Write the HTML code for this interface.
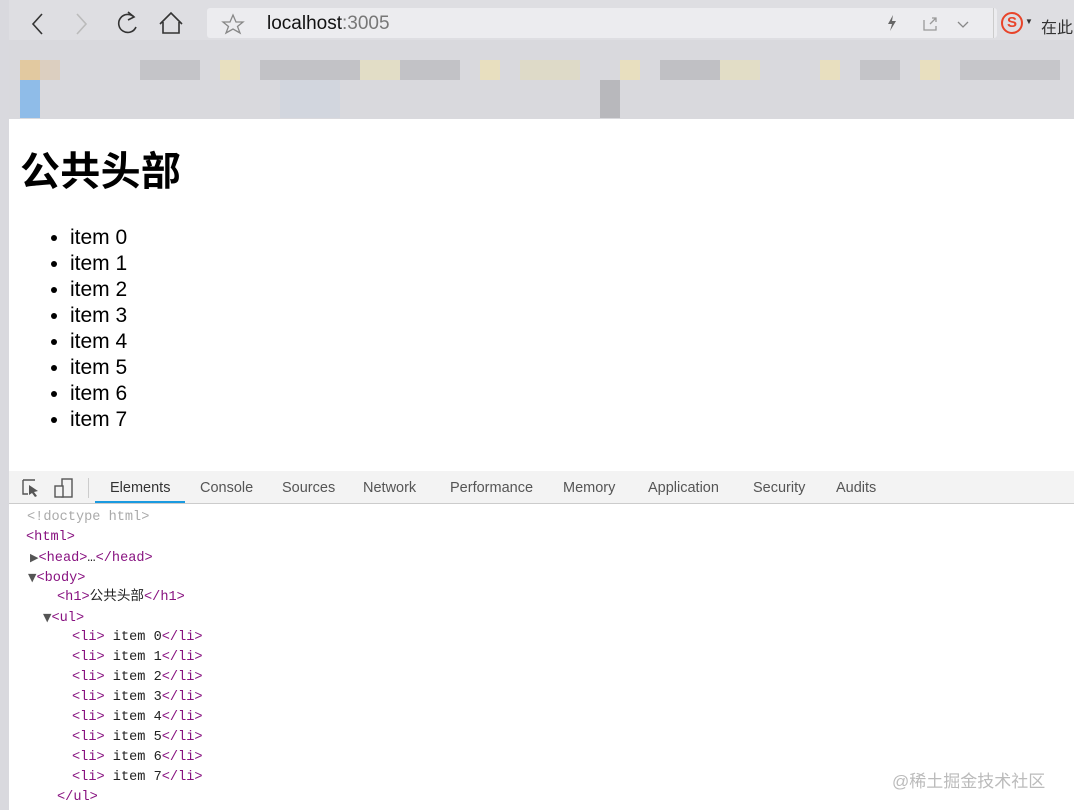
<!DOCTYPE html>
<html><head><meta charset="utf-8"><style>
*{margin:0;padding:0;box-sizing:border-box}
body{width:1074px;height:810px;overflow:hidden;background:#fff;font-family:"Liberation Sans","Noto Sans CJK SC",sans-serif;position:relative}
.strip{position:absolute;left:0;top:0;width:9px;height:810px;background:#d9d9de}
.top{position:absolute;left:0;top:0;width:1074px;height:40px;background:#dedee2}
.url{position:absolute;left:207px;top:8px;width:790px;height:30px;background:#ececef;border-radius:3px}
.blur{position:absolute;left:0;top:40px;width:1074px;height:79px;background:#d9d9dd}
.b{position:absolute;height:20px}
.page{position:absolute;left:9px;top:119px;width:1065px;height:352px;background:#fff}
h1{position:absolute;left:20px;top:142px;font-size:40px;line-height:60px;letter-spacing:0.3px;font-weight:bold;font-family:"Liberation Sans","Noto Sans CJK SC",sans-serif}
ul{position:absolute;left:70px;top:225px;font-size:21px;line-height:26px}
.tb{position:absolute;left:9px;top:471px;width:1065px;height:33px;background:#f3f3f3;border-bottom:1px solid #ccc}
.tab{position:absolute;top:480px;font-size:14.5px;color:#555}
.code{position:absolute;font-family:"Liberation Mono","Noto Sans CJK SC",monospace;font-size:13.6px;line-height:16px;color:#881280;white-space:pre}
.t{color:#222}
.tri{color:#555;font-size:11px;font-family:"DejaVu Sans",sans-serif}
</style></head><body>
<div class="top"></div>
<div class="url"></div>
<svg style="position:absolute;left:0;top:0" width="420" height="40">
<circle cx="-2" cy="25" r="6" fill="#444"/>
<path d="M42 14 L33 24 L42 34" fill="none" stroke="#333" stroke-width="1.6"/>
<path d="M77 14 L86 24 L77 34" fill="none" stroke="#bbb" stroke-width="1.6"/>
<path d="M134 17 A9 9 0 1 0 136 27" fill="none" stroke="#333" stroke-width="1.6"/>
<path d="M128 12 L134 17 L128 20" fill="none" stroke="#333" stroke-width="1.6"/>
<path d="M160 24 L171 13 L182 24 M163 22 V33 H179 V22" fill="none" stroke="#333" stroke-width="1.6"/>
<path d="M233 15 L236 22 L243 22 L237.5 26.5 L240 33 L233 29 L226 33 L228.5 26.5 L223 22 L230 22Z" fill="none" stroke="#888" stroke-width="1.3"/>
</svg>
<div style="position:absolute;left:267px;top:13px;font-size:19px;color:#111">localhost<span style="color:#777">:3005</span></div>
<svg style="position:absolute;left:886px;top:14px" width="12" height="18"><path d="M7 1 L2 10 H6 L4 17 L10 7 H6Z" fill="#666"/></svg>
<svg style="position:absolute;left:920px;top:14px" width="60" height="20"><path d="M4 6 V16 H16 V12 M10 10 L16 4 M12 4 H16 V8" fill="none" stroke="#999" stroke-width="1.3"/><path d="M38 8 L43 13 L48 8" fill="none" stroke="#888" stroke-width="1.3"/></svg>
<div style="position:absolute;left:993px;top:8px;width:1px;height:30px;background:#ccc"></div>
<div style="position:absolute;left:1001px;top:12px;width:22px;height:22px;border-radius:50%;border:2.5px solid #e8442a;color:#e8442a;font-weight:bold;font-size:15px;text-align:center;line-height:17px">S</div>
<div style="position:absolute;left:1025px;top:17px;font-size:8px;color:#333">▼</div>
<div style="position:absolute;left:1041px;top:14px;font-size:16px;color:#333">在此</div>
<div class="blur">
<div class="b" style="left:20px;top:20px;width:20px;background:#e2c9a0"></div>
<div class="b" style="left:40px;top:20px;width:20px;background:#dccfc0"></div>
<div class="b" style="left:20px;top:40px;width:20px;height:38px;background:#8fbce8"></div>
<div class="b" style="left:140px;top:20px;width:60px;background:#c4c4c8"></div>
<div class="b" style="left:220px;top:20px;width:20px;background:#e8e0c0"></div>
<div class="b" style="left:260px;top:20px;width:100px;background:#c2c2c6"></div>
<div class="b" style="left:360px;top:20px;width:40px;background:#e2ddc6"></div>
<div class="b" style="left:400px;top:20px;width:60px;background:#c2c2c6"></div>
<div class="b" style="left:480px;top:20px;width:20px;background:#e8dfbf"></div>
<div class="b" style="left:520px;top:20px;width:60px;background:#dedac8"></div>
<div class="b" style="left:620px;top:20px;width:20px;background:#e8dfbf"></div>
<div class="b" style="left:660px;top:20px;width:60px;background:#c0c0c4"></div>
<div class="b" style="left:720px;top:20px;width:40px;background:#e2ddc6"></div>
<div class="b" style="left:820px;top:20px;width:20px;background:#e8dfbf"></div>
<div class="b" style="left:860px;top:20px;width:40px;background:#c4c4c8"></div>
<div class="b" style="left:920px;top:20px;width:20px;background:#e8dfbf"></div>
<div class="b" style="left:960px;top:20px;width:100px;background:#c6c6ca"></div>
<div class="b" style="left:280px;top:40px;width:60px;height:38px;background:#d2d6de"></div>
<div class="b" style="left:600px;top:40px;width:20px;height:38px;background:#b8b8bc"></div>
</div>
<div class="page"></div>
<div class="strip"></div>
<h1>公共头部</h1>
<ul><li>item 0</li><li>item 1</li><li>item 2</li><li>item 3</li><li>item 4</li><li>item 5</li><li>item 6</li><li>item 7</li></ul>
<div class="tb"></div>
<svg style="position:absolute;left:20px;top:477px" width="60" height="22"><path d="M3 3 H15 M3 3 V17 H8" fill="none" stroke="#555" stroke-width="1.4"/><path d="M9 8 L18 14 L14 15 L17 19 L15 20 L12 16 L9 18Z" fill="#555"/><rect x="42" y="2" width="10" height="18" fill="none" stroke="#555" stroke-width="1.4"/><rect x="35" y="9" width="8" height="11" fill="#f3f3f3" stroke="#555" stroke-width="1.4"/></svg>
<div style="position:absolute;left:88px;top:478px;width:1px;height:20px;background:#ccc"></div>
<div class="tab" style="left:110px;color:#333">Elements</div>
<div style="position:absolute;left:95px;top:501px;width:90px;height:2px;background:#1a9ae0"></div>
<div class="tab" style="left:200px">Console</div>
<div class="tab" style="left:282px">Sources</div>
<div class="tab" style="left:363px">Network</div>
<div class="tab" style="left:450px">Performance</div>
<div class="tab" style="left:563px">Memory</div>
<div class="tab" style="left:648px">Application</div>
<div class="tab" style="left:753px">Security</div>
<div class="tab" style="left:836px">Audits</div>
<div class="code" style="left:27px;top:510px;color:#aaa">&lt;!doctype html&gt;</div>
<div class="code" style="left:26px;top:530px">&lt;html&gt;</div>
<div class="code" style="left:30px;top:550px"><span class="tri">▶</span>&lt;head&gt;<span class="t">…</span>&lt;/head&gt;</div>
<div class="code" style="left:28px;top:570px"><span class="tri">▼</span>&lt;body&gt;</div>
<div class="code" style="left:57px;top:590px">&lt;h1&gt;<span class="t">公共头部</span>&lt;/h1&gt;</div>
<div class="code" style="left:43px;top:610px"><span class="tri">▼</span>&lt;ul&gt;</div>
<div class="code" style="left:72px;top:630px">&lt;li&gt;<span class="t"> item 0</span>&lt;/li&gt;</div>
<div class="code" style="left:72px;top:650px">&lt;li&gt;<span class="t"> item 1</span>&lt;/li&gt;</div>
<div class="code" style="left:72px;top:670px">&lt;li&gt;<span class="t"> item 2</span>&lt;/li&gt;</div>
<div class="code" style="left:72px;top:690px">&lt;li&gt;<span class="t"> item 3</span>&lt;/li&gt;</div>
<div class="code" style="left:72px;top:710px">&lt;li&gt;<span class="t"> item 4</span>&lt;/li&gt;</div>
<div class="code" style="left:72px;top:730px">&lt;li&gt;<span class="t"> item 5</span>&lt;/li&gt;</div>
<div class="code" style="left:72px;top:750px">&lt;li&gt;<span class="t"> item 6</span>&lt;/li&gt;</div>
<div class="code" style="left:72px;top:770px">&lt;li&gt;<span class="t"> item 7</span>&lt;/li&gt;</div>
<div class="code" style="left:57px;top:790px">&lt;/ul&gt;</div>
<div style="position:absolute;left:892px;top:767px;font-size:17px;color:#bbb">@稀土掘金技术社区</div>
</body></html>
